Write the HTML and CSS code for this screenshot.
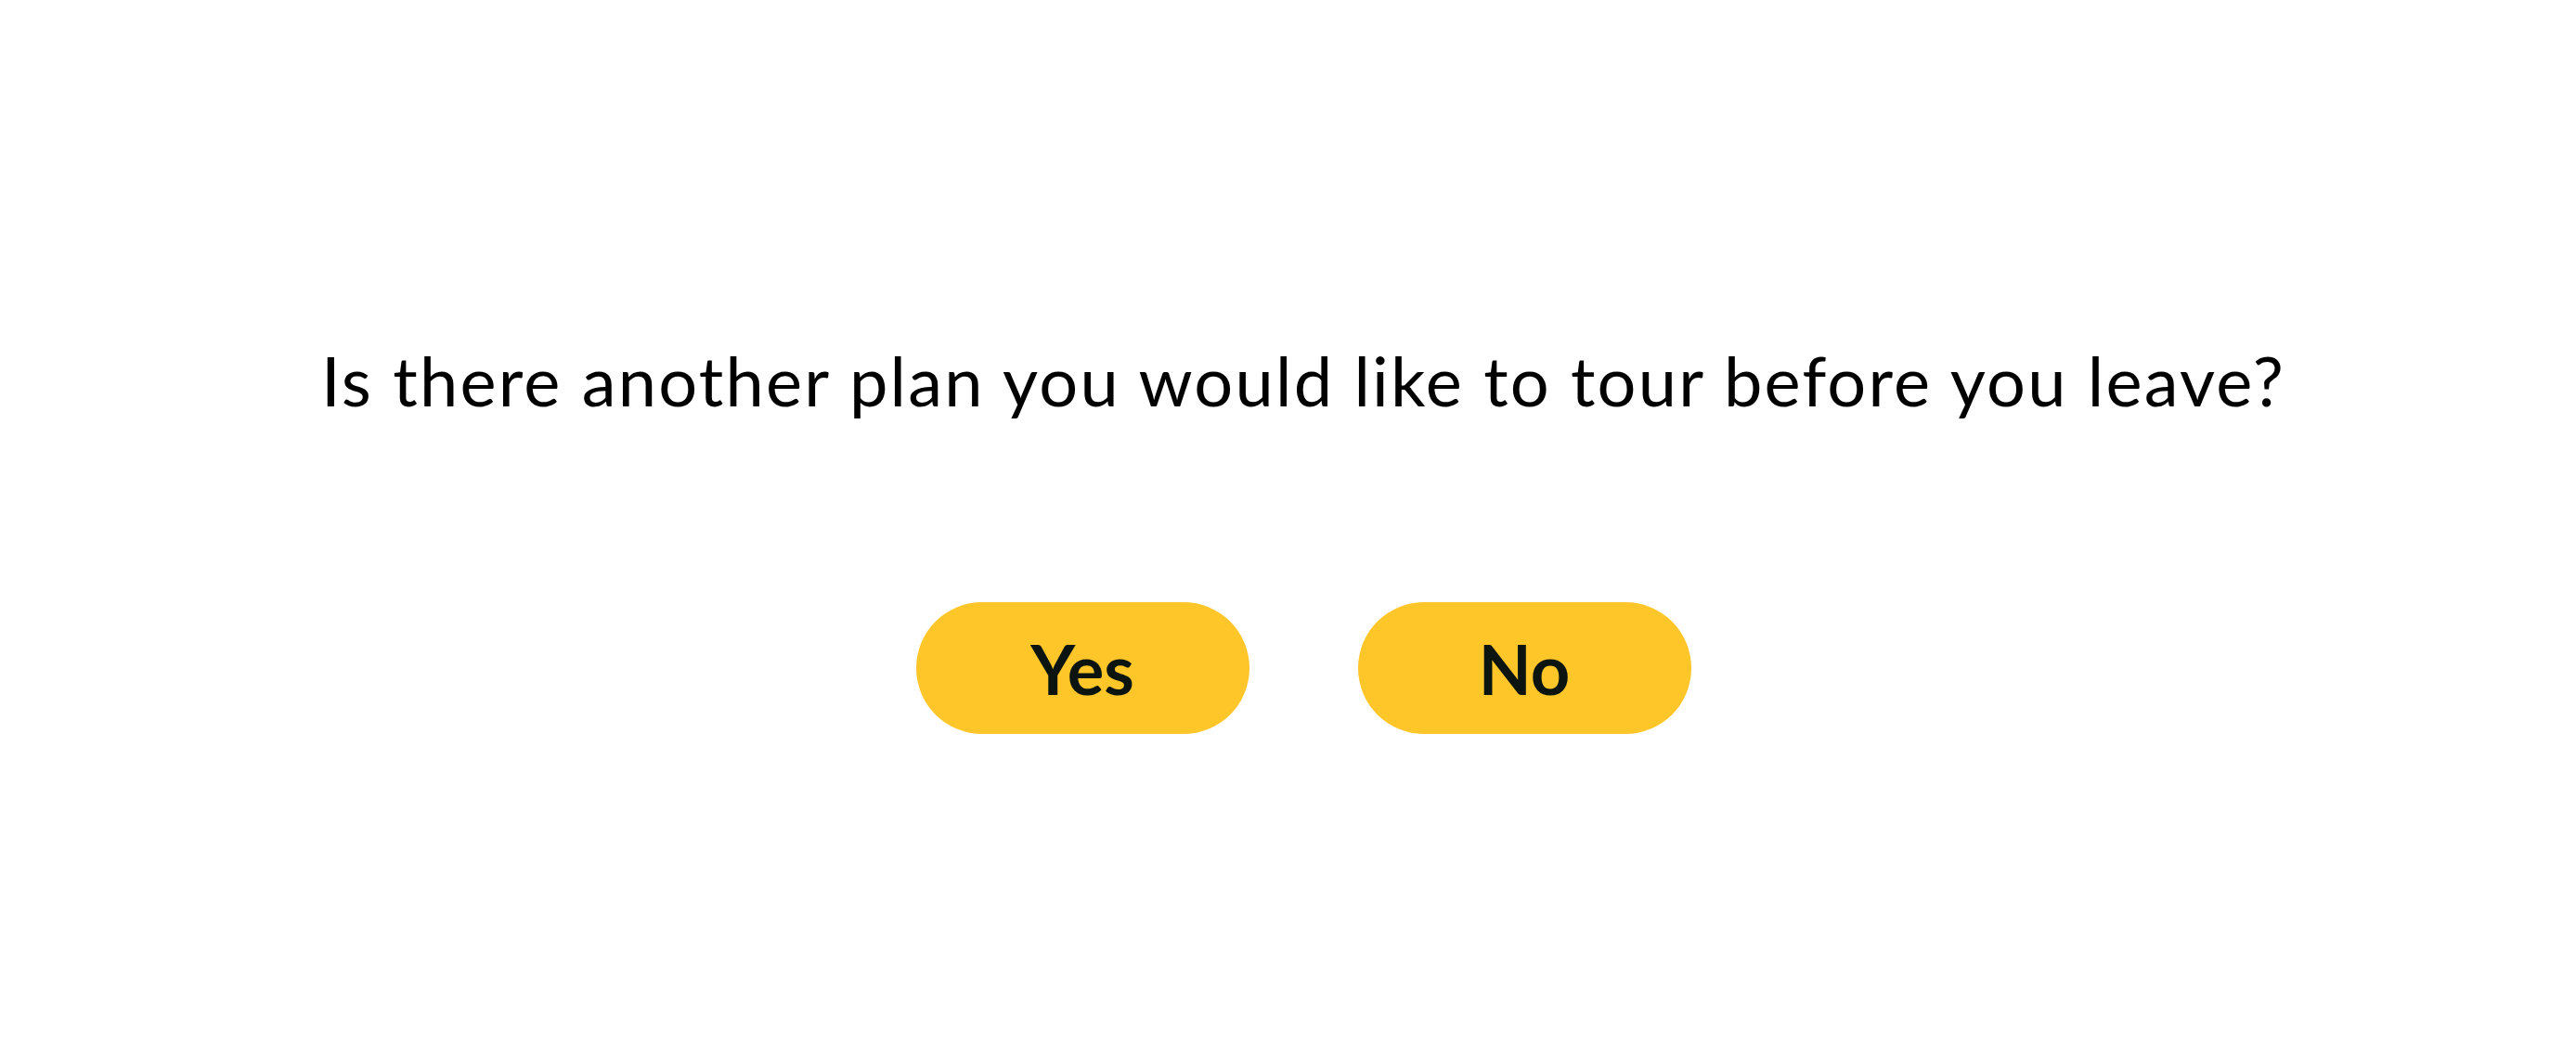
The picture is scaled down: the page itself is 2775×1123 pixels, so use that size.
FILE: index.html
```html
<!DOCTYPE html>
<html lang="en">
<head>
<meta charset="utf-8">
<title>Tour another plan</title>
<link rel="stylesheet" href="styles.css">
</head>
<body>
<main class="screen">
  <h1 class="question">Is there another plan you would like to tour before you leave?</h1>
  <div class="actions">
    <button class="pill" type="button">Yes</button>
    <button class="pill" type="button">No</button>
  </div>
</main>
</body>
</html>
```
FILE: styles.css
```css
html, body {
  margin: 0;
  padding: 0;
  background: #ffffff;
}
.screen {
  width: 2775px;
  height: 1123px;
  box-sizing: border-box;
  padding-left: 33px;
  display: flex;
  flex-direction: column;
  align-items: center;
  font-family: Lato, "Noto Sans", sans-serif;
  color: #000000;
}
.question {
  margin: 373px 0 0 0;
  font-size: 74px;
  line-height: 74px;
  font-weight: 400;
  letter-spacing: 2.2px;
  white-space: nowrap;
}
.actions {
  margin-top: 202px;
  display: flex;
  gap: 117px;
}
.pill {
  width: 359px;
  height: 142px;
  border: none;
  border-radius: 71px;
  background: #ffc629;
  color: #0c1410;
  font-family: Lato, "Noto Sans", sans-serif;
  font-size: 74px;
  font-weight: 700;
  padding: 0;
  cursor: pointer;
}
```
